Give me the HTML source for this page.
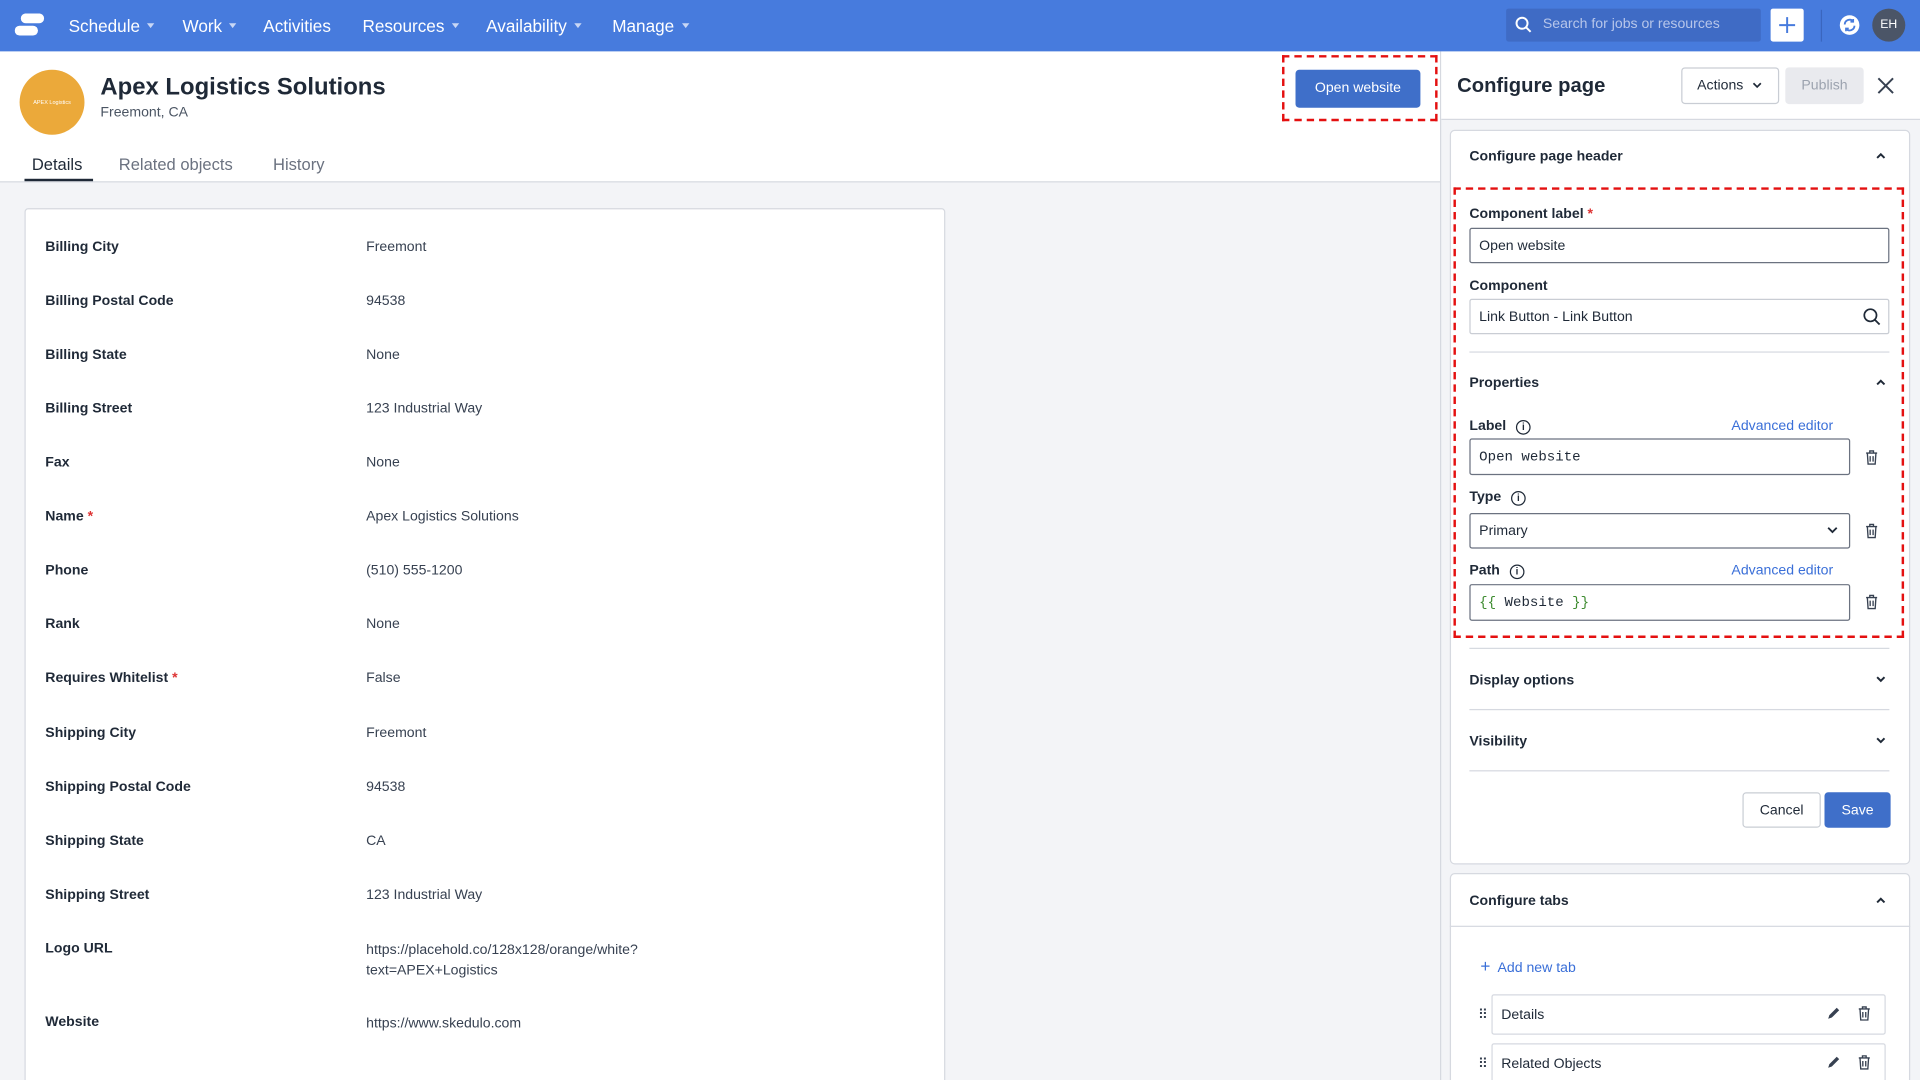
<!DOCTYPE html>
<html><head><meta charset="utf-8"><style>
*{box-sizing:border-box;margin:0;padding:0}
html,body{width:1920px;height:1080px;overflow:hidden;background:#f3f4f7}
#r{position:absolute;left:0;top:0;width:1568px;height:882px;transform:scale(1.22449);transform-origin:0 0;font-family:"Liberation Sans",sans-serif;color:#1f2937;background:#f3f4f7;overflow:hidden}
.a{position:absolute}
.nav{left:0;top:0;width:1568px;height:42px;background:#477bdd}
.nv{top:13px;color:#fff;font-size:14px;white-space:nowrap}
.car{display:inline-block;width:0;height:0;border-left:3.5px solid transparent;border-right:3.5px solid transparent;border-top:4px solid #c9d7f5;margin-left:6px;vertical-align:3px}
.lbl{left:37px;font-size:11.5px;font-weight:bold;color:#1f2937;margin-top:2px}
.val{left:299px;font-size:11.5px;color:#374151;margin-top:1px}
.req{color:#d33}
.inp{position:absolute;border:1px solid #6b7280;border-radius:2px;background:#fff;font-size:11.5px;padding-left:7px;display:flex;align-items:center}
.fl{position:absolute;font-size:11.5px;font-weight:bold;color:#1f2937;margin-top:2px}
.sec{position:absolute;left:1200px;font-size:11.5px;font-weight:bold;color:#1f2937;margin-top:2px}
.hr{position:absolute;height:1px;background:#d6d9e0}
.link{position:absolute;font-size:11.5px;color:#3a6fd8;margin-top:2px}
.info{display:inline-block;width:12px;height:12px;border:1.3px solid #1f2937;border-radius:50%;font-size:8px;text-align:center;line-height:10px;font-weight:bold;vertical-align:0px;margin-left:8px}
</style></head><body><div id="r">
<!-- nav -->
<div class="a nav"></div>
<svg class="a" style="left:12px;top:11px" width="26" height="20"><rect x="5" y="0" width="19" height="8" rx="4" fill="#fff"/><rect x="0" y="10" width="19" height="8" rx="4" fill="#fff"/></svg>
<div class="a nv" style="left:56px">Schedule<span class="car"></span></div>
<div class="a nv" style="left:149px">Work<span class="car"></span></div>
<div class="a nv" style="left:215px">Activities</div>
<div class="a nv" style="left:296px">Resources<span class="car"></span></div>
<div class="a nv" style="left:397px">Availability<span class="car"></span></div>
<div class="a nv" style="left:500px">Manage<span class="car"></span></div>
<div class="a" style="left:1230px;top:7px;width:208px;height:27px;background:#3f6bc5;border-radius:2px"></div>
<svg class="a" style="left:1237px;top:13px" width="14" height="14"><circle cx="6" cy="6" r="4.5" stroke="#fff" stroke-width="1.6" fill="none"/><path d="M9.5 9.5L13 13" stroke="#fff" stroke-width="1.6"/></svg>
<div class="a" style="left:1260px;top:14px;font-size:11.5px;color:#b7c6ea">Search for jobs or resources</div>
<div class="a" style="left:1446px;top:7px;width:27px;height:27px;background:#fff;border-radius:2px"></div>
<svg class="a" style="left:1452px;top:13px" width="15" height="15"><path d="M7.5 1V14M1 7.5H14" stroke="#477bdd" stroke-width="1.6"/></svg>
<div class="a" style="left:1487px;top:8px;width:1px;height:26px;background:#3a66bf"></div>
<svg class="a" style="left:1502px;top:12px" width="17" height="17"><circle cx="8.5" cy="8.5" r="8" fill="#fff"/><path d="M4.5 8a4 4 0 0 1 7-2.5M12.5 9a4 4 0 0 1-7 2.5" stroke="#477bdd" stroke-width="1.5" fill="none"/><path d="M11.5 3.5v2.3h-2.3M5.5 13.5v-2.3h2.3" stroke="#477bdd" stroke-width="1.3" fill="none"/></svg>
<div class="a" style="left:1529px;top:7px;width:27px;height:27px;border-radius:50%;background:#4b5567;color:#fff;font-size:10px;text-align:center;line-height:27px">EH</div>
<!-- left header -->
<div class="a" style="left:0;top:42px;width:1176px;height:107px;background:#fff;border-bottom:1px solid #d6d9e0"></div>
<div class="a" style="left:16px;top:57px;width:53px;height:53px;border-radius:50%;background:#eba93a;color:#fff;font-size:4.5px;text-align:center;line-height:53px">APEX Logistics</div>
<div class="a" style="left:82px;top:60px;font-size:19.5px;font-weight:bold;color:#1f2937">Apex Logistics Solutions</div>
<div class="a" style="left:82px;top:86px;font-size:11.5px;color:#4b5563">Freemont, CA</div>
<div class="a" style="left:26px;top:127px;font-size:13.5px;color:#1f2937">Details</div>
<div class="a" style="left:20px;top:146px;width:56px;height:2px;background:#1f2937"></div>
<div class="a" style="left:97px;top:127px;font-size:13.5px;color:#6b7280">Related objects</div>
<div class="a" style="left:223px;top:127px;font-size:13.5px;color:#6b7280">History</div>
<div class="a" style="left:1047px;top:45px;width:127px;height:54px;border:2.5px dashed #e41010"></div>
<div class="a" style="left:1058px;top:57px;width:102px;height:31px;background:#3f6fc9;border-radius:3px;color:#fff;font-size:11.5px;text-align:center;line-height:31px">Open website</div>
<!-- card -->
<div class="a" style="left:20px;top:170px;width:752px;height:730px;background:#fff;border:1px solid #d6d9e0;border-radius:3px"></div>
<div class="a lbl" style="top:194px">Billing City</div><div class="a val" style="top:195px">Freemont</div>
<div class="a lbl" style="top:238px">Billing Postal Code</div><div class="a val" style="top:239px">94538</div>
<div class="a lbl" style="top:282px">Billing State</div><div class="a val" style="top:283px">None</div>
<div class="a lbl" style="top:326px">Billing Street</div><div class="a val" style="top:327px">123 Industrial Way</div>
<div class="a lbl" style="top:370px">Fax</div><div class="a val" style="top:371px">None</div>
<div class="a lbl" style="top:414px">Name <span class="req">*</span></div><div class="a val" style="top:415px">Apex Logistics Solutions</div>
<div class="a lbl" style="top:458px">Phone</div><div class="a val" style="top:459px">(510) 555-1200</div>
<div class="a lbl" style="top:502px">Rank</div><div class="a val" style="top:503px">None</div>
<div class="a lbl" style="top:546px">Requires Whitelist <span class="req">*</span></div><div class="a val" style="top:547px">False</div>
<div class="a lbl" style="top:591px">Shipping City</div><div class="a val" style="top:592px">Freemont</div>
<div class="a lbl" style="top:635px">Shipping Postal Code</div><div class="a val" style="top:636px">94538</div>
<div class="a lbl" style="top:679px">Shipping State</div><div class="a val" style="top:680px">CA</div>
<div class="a lbl" style="top:723px">Shipping Street</div><div class="a val" style="top:724px">123 Industrial Way</div>
<div class="a lbl" style="top:767px">Logo URL</div><div class="a val" style="top:767px;line-height:16.5px">https://placehold.co/128x128/orange/white?<br>text=APEX+Logistics</div>
<div class="a lbl" style="top:827px">Website</div><div class="a val" style="top:829px">https://www.skedulo.com</div>
<!-- right panel -->
<div class="a" style="left:1176px;top:42px;width:1px;height:840px;background:#d6d9e0"></div>
<div class="a" style="left:1177px;top:42px;width:391px;height:56px;background:#fff;border-bottom:1px solid #d6d9e0"></div>
<div class="a" style="left:1190px;top:61px;font-size:16.5px;font-weight:bold;color:#1f2937">Configure page</div>
<div class="a" style="left:1373px;top:55px;width:80px;height:30px;border:1px solid #c9cdd4;border-radius:3px;background:#fff;font-size:11.5px;line-height:28px;padding-left:12px">Actions <svg width="8" height="6" style="margin-left:4px"><path d="M1 1l3 3 3-3" stroke="#1f2937" stroke-width="1.4" fill="none"/></svg></div>
<div class="a" style="left:1458px;top:55px;width:64px;height:30px;border-radius:3px;background:#e9eaee;color:#9ca3af;font-size:11.5px;text-align:center;line-height:30px">Publish</div>
<svg class="a" style="left:1533px;top:63px" width="14" height="14"><path d="M1 1L13 13M13 1L1 13" stroke="#374151" stroke-width="1.6"/></svg>
<div class="a" style="left:1184px;top:106px;width:376px;height:600px;background:#fff;border:1px solid #d6d9e0;border-radius:4px"></div>
<div class="sec" style="top:120px">Configure page header</div>
<svg class="a" style="left:1532px;top:124px" width="8" height="6"><path d="M1 5l3-3 3 3" stroke="#1f2937" stroke-width="1.6" fill="none"/></svg>
<div class="a" style="left:1187px;top:153px;width:368px;height:368px;border:2.5px dashed #e41010"></div>
<div class="fl" style="left:1200px;top:167px">Component label <span class="req">*</span></div>
<div class="inp" style="left:1200px;top:186px;width:343px;height:29px">Open website</div>
<div class="fl" style="left:1200px;top:226px">Component</div>
<div class="inp" style="left:1200px;top:244px;width:343px;height:29px;border-color:#c9cdd4">Link Button - Link Button</div>
<svg class="a" style="left:1521px;top:251px" width="15" height="15"><circle cx="6.5" cy="6.5" r="5" stroke="#1f2937" stroke-width="1.4" fill="none"/><path d="M10 10l4 4" stroke="#1f2937" stroke-width="1.5"/></svg>
<div class="hr" style="left:1200px;top:287px;width:343px"></div>
<div class="sec" style="top:305px">Properties</div>
<svg class="a" style="left:1532px;top:309px" width="8" height="6"><path d="M1 5l3-3 3 3" stroke="#1f2937" stroke-width="1.6" fill="none"/></svg>
<div class="fl" style="left:1200px;top:340px">Label<span class="info">i</span></div>
<div class="link" style="left:1414px;top:340px">Advanced editor</div>
<div class="inp" style="left:1200px;top:358px;width:311px;height:30px;font-family:'Liberation Mono',monospace;font-size:11.5px">Open website</div>
<div class="fl" style="left:1200px;top:398px">Type<span class="info">i</span></div>
<div class="inp" style="left:1200px;top:419px;width:311px;height:29px">Primary</div>
<svg class="a" style="left:1492px;top:430px" width="9" height="6"><path d="M1 1l3.5 3.5L8 1" stroke="#1f2937" stroke-width="1.5" fill="none"/></svg>
<div class="fl" style="left:1200px;top:458px">Path<span class="info">i</span></div>
<div class="link" style="left:1414px;top:458px">Advanced editor</div>
<div class="inp" style="left:1200px;top:477px;width:311px;height:30px;font-family:'Liberation Mono',monospace;font-size:11.5px"><span style="color:#3d8b2f">{{&nbsp;</span>Website<span style="color:#3d8b2f">&nbsp;}}</span></div>
<svg class="a" style="left:1523px;top:367px" width="11" height="13"><path d="M1 3h9M4 3V1.3h3V3M2 3l.6 9h5.8L9 3M4.3 5.5v4.5M6.7 5.5v4.5" stroke="#374151" stroke-width="1.1" fill="none"/></svg>
<svg class="a" style="left:1523px;top:427px" width="11" height="13"><path d="M1 3h9M4 3V1.3h3V3M2 3l.6 9h5.8L9 3M4.3 5.5v4.5M6.7 5.5v4.5" stroke="#374151" stroke-width="1.1" fill="none"/></svg>
<svg class="a" style="left:1523px;top:485px" width="11" height="13"><path d="M1 3h9M4 3V1.3h3V3M2 3l.6 9h5.8L9 3M4.3 5.5v4.5M6.7 5.5v4.5" stroke="#374151" stroke-width="1.1" fill="none"/></svg>
<div class="hr" style="left:1200px;top:529px;width:343px"></div>
<div class="sec" style="top:548px">Display options</div>
<svg class="a" style="left:1532px;top:552px" width="8" height="6"><path d="M1 1l3 3 3-3" stroke="#1f2937" stroke-width="1.6" fill="none"/></svg>
<div class="hr" style="left:1200px;top:579px;width:343px"></div>
<div class="sec" style="top:598px">Visibility</div>
<svg class="a" style="left:1532px;top:602px" width="8" height="6"><path d="M1 1l3 3 3-3" stroke="#1f2937" stroke-width="1.6" fill="none"/></svg>
<div class="hr" style="left:1200px;top:629px;width:343px"></div>
<div class="a" style="left:1423px;top:647px;width:64px;height:29px;border:1px solid #c9cdd4;border-radius:3px;background:#fff;font-size:11.5px;text-align:center;line-height:29px">Cancel</div>
<div class="a" style="left:1490px;top:647px;width:54px;height:29px;background:#3f6fc9;border-radius:3px;color:#fff;font-size:11.5px;text-align:center;line-height:30px">Save</div>
<div class="a" style="left:1184px;top:713px;width:376px;height:200px;background:#fff;border:1px solid #d6d9e0;border-radius:4px"></div>
<div class="sec" style="top:728px">Configure tabs</div>
<svg class="a" style="left:1532px;top:732px" width="8" height="6"><path d="M1 5l3-3 3 3" stroke="#1f2937" stroke-width="1.6" fill="none"/></svg>
<div class="hr" style="left:1184px;top:756px;width:376px"></div>
<div class="link" style="left:1209px;top:779px"><b style="font-size:14px;font-weight:normal">+</b>&nbsp; Add new tab</div>
<div class="a" style="left:1218px;top:812px;width:322px;height:33px;border:1px solid #d6d9e0;border-radius:2px;background:#fff;font-size:11.5px;line-height:33px;padding-left:7px">Details</div>
<div class="a" style="left:1218px;top:852px;width:322px;height:40px;border:1px solid #d6d9e0;border-radius:2px;background:#fff;font-size:11.5px;padding:10px 0 0 7px">Related Objects</div>
<div class="a" style="left:1207px;top:822px;font-size:11px;color:#374151;letter-spacing:-1px">⠿</div>
<div class="a" style="left:1207px;top:862px;font-size:11px;color:#374151;letter-spacing:-1px">⠿</div>
<svg class="a" style="left:1491px;top:821px" width="12" height="13"><path d="M2 11l1-3 6-6 2 2-6 6z" fill="#374151"/></svg>
<svg class="a" style="left:1491px;top:861px" width="12" height="13"><path d="M2 11l1-3 6-6 2 2-6 6z" fill="#374151"/></svg>
<svg class="a" style="left:1517px;top:821px" width="11" height="13"><path d="M1 3h9M4 3V1.3h3V3M2 3l.6 9h5.8L9 3M4.3 5.5v4.5M6.7 5.5v4.5" stroke="#374151" stroke-width="1.1" fill="none"/></svg>
<svg class="a" style="left:1517px;top:861px" width="11" height="13"><path d="M1 3h9M4 3V1.3h3V3M2 3l.6 9h5.8L9 3M4.3 5.5v4.5M6.7 5.5v4.5" stroke="#374151" stroke-width="1.1" fill="none"/></svg>
</div></body></html>
